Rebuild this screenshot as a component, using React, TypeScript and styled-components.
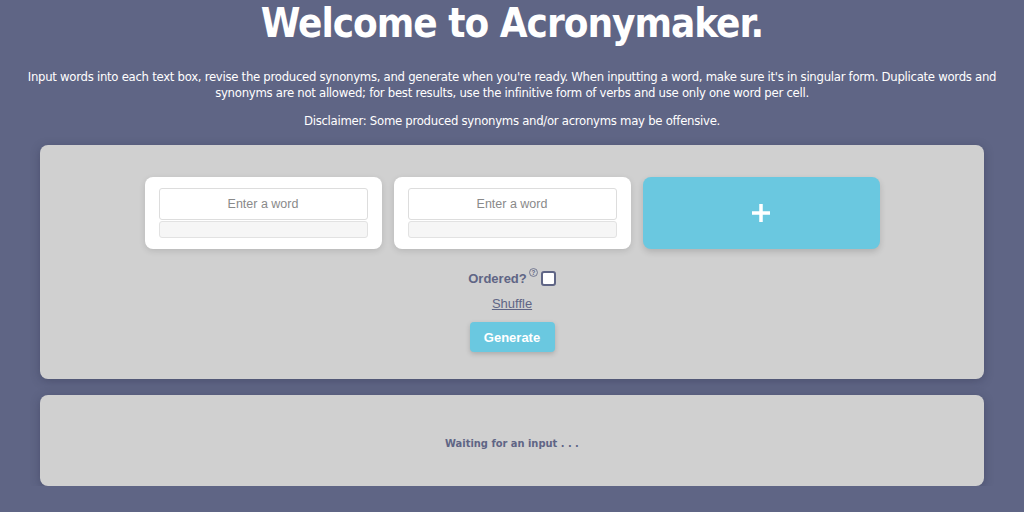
import styled, { createGlobalStyle } from "styled-components";

const GlobalStyle = createGlobalStyle`
  html, body {
    margin: 0;
    padding: 0;
    background-color: #5f6585;
    font-family: "DejaVu Sans Condensed", "DejaVu Sans", sans-serif;
  }
`;

const navy = "#5f6585";
const cyan = "#6ac8e0";

const Page = styled.div`
  display: flex;
  flex-direction: column;
  align-items: center;
  padding: 0 24px;
  color: #ffffff;
`;

const Title = styled.h1`
  margin: 0;
  padding-top: 1px;
  font-size: 40px;
  font-weight: bold;
  line-height: 44px;
  letter-spacing: -1px;
`;

const Intro = styled.p`
  margin: 24px 0 0;
  font-size: 13px;
  letter-spacing: -0.28px;
  line-height: 16px;
  text-align: center;
`;

const Disclaimer = styled.p`
  margin: 12px 0 0;
  font-size: 13px;
  letter-spacing: -0.28px;
  line-height: 16px;
  text-align: center;
`;

const Panel = styled.section<{ $top: number; $pad: string }>`
  box-sizing: border-box;
  align-self: stretch;
  margin: ${(p) => p.$top}px 16px 0;
  padding: ${(p) => p.$pad};
  background-color: #d0d0d0;
  border-radius: 8px;
  box-shadow: 0 2px 10px rgba(40, 44, 70, 0.35);
  display: flex;
  flex-direction: column;
  align-items: center;
`;

const CardRow = styled.div`
  display: flex;
  gap: 12px;
`;

const Card = styled.div`
  box-sizing: border-box;
  width: 237px;
  height: 72px;
  padding: 11px 14px 0;
  background-color: #ffffff;
  border-radius: 8px;
  box-shadow: 0 2px 6px rgba(0, 0, 0, 0.12);
  display: flex;
  flex-direction: column;
  gap: 1px;
`;

const WordInput = styled.input`
  box-sizing: border-box;
  width: 100%;
  height: 32px;
  border: 1px solid #dddddd;
  border-radius: 3px;
  background: #ffffff;
  text-align: center;
  font-family: "Liberation Sans", Arial, sans-serif;
  font-size: 12.5px;
  color: #333333;
  outline: 0;
  &::placeholder {
    color: #8a8a8a;
  }
`;

const SynonymBox = styled.div`
  box-sizing: border-box;
  height: 17px;
  border: 1px solid #e2e2e2;
  border-radius: 3px;
  background: #f6f6f6;
`;

const AddButton = styled.button`
  width: 237px;
  height: 72px;
  border: none;
  border-radius: 8px;
  background-color: ${cyan};
  box-shadow: 0 3px 6px rgba(0, 0, 0, 0.15);
  display: flex;
  align-items: center;
  justify-content: center;
  padding: 0;
  cursor: pointer;
`;

const OrderedRow = styled.label`
  margin-top: 22px;
  display: flex;
  align-items: center;
  font-family: "Liberation Sans", Arial, sans-serif;
  font-weight: bold;
  font-size: 13px;
  color: ${navy};
`;

const Help = styled.span`
  display: inline-flex;
  align-self: flex-start;
  margin: -3px 3px 0 2px;
`;

const Check = styled.span`
  box-sizing: border-box;
  width: 15px;
  height: 15px;
  border: 2px solid ${navy};
  border-radius: 3px;
  background: #ffffff;
`;

const Shuffle = styled.a`
  margin-top: 10px;
  font-family: "Liberation Sans", Arial, sans-serif;
  font-size: 13px;
  color: ${navy};
  text-decoration: underline;
`;

const GenerateButton = styled.button`
  margin-top: 11px;
  width: 85px;
  height: 30px;
  border: none;
  border-radius: 4px;
  background-color: ${cyan};
  color: #ffffff;
  font-family: "Liberation Sans", Arial, sans-serif;
  font-weight: bold;
  font-size: 13px;
  box-shadow: 0 2px 5px rgba(0, 0, 0, 0.18);
  cursor: pointer;
`;

const Status = styled.div`
  font-weight: bold;
  font-size: 11px;
  color: ${navy};
`;

function WordCard() {
  return (
    <Card>
      <WordInput placeholder="Enter a word" />
      <SynonymBox />
    </Card>
  );
}

export default function App() {
  return (
    <>
      <GlobalStyle />
      <Page>
        <Title>Welcome to Acronymaker.</Title>
        <Intro>
          Input words into each text box, revise the produced synonyms, and generate when you're ready. When inputting a
          word, make sure it's in singular form. Duplicate words and synonyms are not allowed; for best results, use the
          infinitive form of verbs and use only one word per cell.
        </Intro>
        <Disclaimer>Disclaimer: Some produced synonyms and/or acronyms may be offensive.</Disclaimer>
        <Panel $top={16} $pad="32px 0 27px">
          <CardRow>
            <WordCard />
            <WordCard />
            <AddButton aria-label="Add word">
              <svg width="20" height="20" viewBox="0 0 20 20">
                <path d="M10 1v18M1 10h18" stroke="#ffffff" strokeWidth="3.5" />
              </svg>
            </AddButton>
          </CardRow>
          <OrderedRow>
            Ordered?
            <Help>
              <svg width="9" height="9" viewBox="0 0 10 10">
                <circle cx="5" cy="5" r="4.4" fill="none" stroke={navy} strokeWidth="0.9" />
                <text x="5" y="7.6" textAnchor="middle" fontSize="7" fontFamily="Liberation Sans, sans-serif" fill={navy}>
                  ?
                </text>
              </svg>
            </Help>
            <Check />
          </OrderedRow>
          <Shuffle>Shuffle</Shuffle>
          <GenerateButton>Generate</GenerateButton>
        </Panel>
        <Panel $top={16} $pad="42px 0 36px">
          <Status>Waiting for an input . . .</Status>
        </Panel>
      </Page>
    </>
  );
}
